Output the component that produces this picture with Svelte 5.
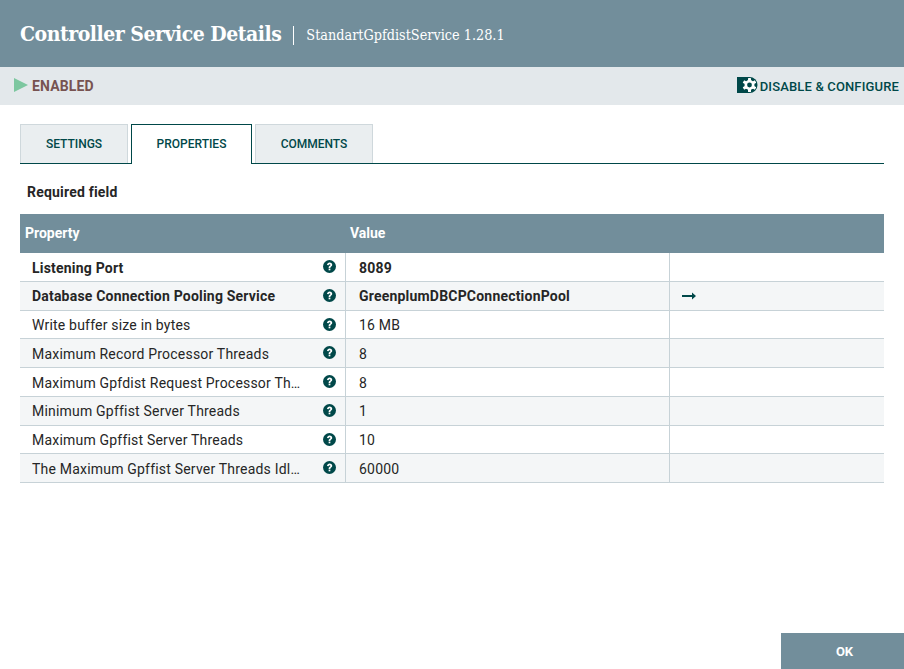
<script>
  const rows = [
    { name: 'Listening Port', value: '8089', bold: true },
    { name: 'Database Connection Pooling Service', value: 'GreenplumDBCPConnectionPool', bold: true, link: true },
    { name: 'Write buffer size in bytes', value: '16 MB' },
    { name: 'Maximum Record Processor Threads', value: '8' },
    { name: 'Maximum Gpfdist Request Processor Threads', value: '8' },
    { name: 'Minimum Gpffist Server Threads', value: '1' },
    { name: 'Maximum Gpffist Server Threads', value: '10' },
    { name: 'The Maximum Gpffist Server Threads Idle Time', value: '60000' }
  ];
</script>

<div class="page">
  <header class="head">
    <h1>Controller Service Details</h1>
    <span class="sub">StandartGpfdistService 1.28.1</span>
  </header>

  <div class="status">
    <div class="state">
      <svg class="play" width="14" height="14" viewBox="0 0 14 14"><path d="M0 0 L14 7 L0 14 Z" fill="#7dc7a0" /></svg>
      <span>ENABLED</span>
    </div>
    <div class="action">
      <svg class="gear" width="21" height="16" viewBox="0 0 21 16">
        <path d="M0 0 H12 V16 H0 Z" fill="#004849" />
        <circle cx="12.5" cy="8" r="8" fill="#004849" />
        <g fill="#fff" transform="translate(12.5 8)">
          <circle r="5" />
          <rect x="-1.5" y="-7" width="3" height="14" rx="0.5" />
          <rect x="-1.5" y="-7" width="3" height="14" rx="0.5" transform="rotate(60)" />
          <rect x="-1.5" y="-7" width="3" height="14" rx="0.5" transform="rotate(120)" />
        </g>
        <circle cx="12.5" cy="8" r="2.4" fill="#004849" />
      </svg>
      <span>DISABLE &amp; CONFIGURE</span>
    </div>
  </div>

  <main class="body">
    <nav class="tabs">
      <div class="tab settings">SETTINGS</div>
      <div class="tab active">PROPERTIES</div>
      <div class="tab comments">COMMENTS</div>
    </nav>

    <div class="req">Required field</div>

    <div class="table">
      <div class="thead">
        <div class="th name">Property</div>
        <div class="th">Value</div>
      </div>
      {#each rows as r, i}
        <div class="row" class:even={i % 2 === 1} class:bold={r.bold}>
          <div class="cell name">
            <span class="label">{r.name}</span>
            <svg class="help" width="13" height="13" viewBox="0 0 24 24">
              <circle cx="12" cy="12" r="12" fill="#004849" />
              <path d="M7.4 9.2 C7.6 6.2 9.8 4.6 12.2 4.6 C15 4.6 17 6.4 17 8.8 C17 10.6 16 11.5 14.7 12.4 C13.8 13 13.6 13.4 13.6 14.6 H10.4 C10.4 12.6 10.9 11.7 12.3 10.7 C13.3 10 13.7 9.6 13.7 9 C13.7 8.2 13.1 7.7 12.2 7.7 C11.2 7.7 10.6 8.3 10.4 9.6 Z" fill="#fff" />
              <rect x="10.4" y="15.8" width="3.2" height="3.2" fill="#fff" />
            </svg>
          </div>
          <div class="cell value">{r.value}</div>
          <div class="cell extra">
            {#if r.link}
              <svg width="14" height="8" viewBox="0 0 14 8"><path d="M0 3 H10 V0.5 L14 4 L10 7.5 V5 H0 Z" fill="#004849" /></svg>
            {/if}
          </div>
        </div>
      {/each}
    </div>
  </main>

  <footer class="foot">
    <div class="ok">OK</div>
  </footer>
</div>

<style>
  :global(body) {
    margin: 0;
    background: #fff;
  }
  .page {
    width: 904px;
    height: 669px;
    display: flex;
    flex-direction: column;
    font-family: Roboto, "Liberation Sans", sans-serif;
    overflow: hidden;
  }
  .head {
    height: 67px;
    background: #728e9b;
    color: #fff;
    display: flex;
    align-items: center;
    padding-left: 20px;
    flex: none;
  }
  h1 {
    margin: 0;
    font-family: "DejaVu Serif Condensed", "DejaVu Serif", serif;
    font-size: 21px;
    font-weight: 700;
    line-height: 30px;
    letter-spacing: -0.48px;
  }
  .sub {
    margin-left: 12px;
    padding-left: 12px;
    border-left: 1px solid #fff;
    font-family: "DejaVu Serif Condensed", "DejaVu Serif", serif;
    font-size: 14.3px;
    line-height: 19px;
    position: relative;
    top: 2px;
  }
  .status {
    height: 38px;
    background: #e3e8eb;
    display: flex;
    justify-content: space-between;
    align-items: center;
    flex: none;
    padding-left: 14px;
    padding-right: 5px;
  }
  .state {
    display: flex;
    align-items: center;
    gap: 4px;
    color: #775351;
    font-weight: 700;
    font-size: 14px;
    letter-spacing: 0.15px;
  }
  .play {
    position: relative;
    top: -1px;
  }
  .action {
    display: flex;
    align-items: center;
    gap: 2px;
    color: #004849;
    font-weight: 500;
    font-size: 13px;
    letter-spacing: 0.15px;
  }
  .gear {
    position: relative;
    top: -1px;
  }
  .body {
    flex: 1;
    padding: 19px 20px 0;
  }
  .tabs {
    display: flex;
    gap: 3px;
    height: 39px;
    border-bottom: 1px solid #004849;
    align-items: flex-start;
  }
  .tab {
    box-sizing: border-box;
    height: 39px;
    background: #eaeef0;
    border: 1px solid #cfd8dc;
    border-bottom: none;
    color: #004849;
    font-size: 12px;
    font-weight: 500;
    display: flex;
    align-items: center;
    justify-content: center;
  }
  .settings {
    width: 108px;
  }
  .active {
    width: 121px;
    height: 40px;
    padding-bottom: 1px;
    background: #fff;
    border-color: #004849;
    border-bottom: none;
  }
  .comments {
    width: 118px;
  }
  .req {
    margin-top: 20px;
    margin-left: 7px;
    font-size: 14px;
    font-weight: 700;
    line-height: 16px;
    letter-spacing: 0.2px;
    color: #262626;
  }
  .table {
    margin-top: 14px;
    font-size: 14px;
    color: #262626;
  }
  .thead {
    height: 39px;
    box-sizing: border-box;
    padding-bottom: 1px;
    background: #728e9b;
    color: #fff;
    font-weight: 700;
    display: flex;
    align-items: center;
  }
  .th {
    padding-left: 5px;
  }
  .th.name {
    width: 320px;
  }
  .row {
    display: grid;
    grid-template-columns: 326px 324px 214px;
    height: 28.75px;
    box-sizing: border-box;
    border-bottom: 1px solid #c7d2d7;
    letter-spacing: 0.2px;
  }
  .row.even {
    background: #f4f6f7;
  }
  .row.bold {
    font-weight: 700;
  }
  .cell {
    display: flex;
    align-items: center;
    box-sizing: border-box;
    min-width: 0;
    padding-top: 1.7px;
  }
  .cell.name {
    padding-left: 12px;
    padding-right: 9px;
    justify-content: space-between;
    border-right: 1px solid #c7d2d7;
  }
  .label {
    display: block;
    width: 270px;
    white-space: nowrap;
    overflow: hidden;
    text-overflow: ellipsis;
  }
  .help {
    flex: none;
    position: relative;
    top: -1px;
  }
  .cell.value {
    padding-left: 13px;
    border-right: 1px solid #c7d2d7;
  }
  .cell.extra {
    padding-left: 12px;
  }
  .foot {
    flex: none;
    display: flex;
    justify-content: flex-end;
  }
  .ok {
    width: 123px;
    height: 36px;
    box-sizing: border-box;
    padding: 1px 0 0 4px;
    background: #728e9b;
    color: #fff;
    font-size: 13px;
    font-weight: 700;
    display: flex;
    align-items: center;
    justify-content: center;
  }
</style>
